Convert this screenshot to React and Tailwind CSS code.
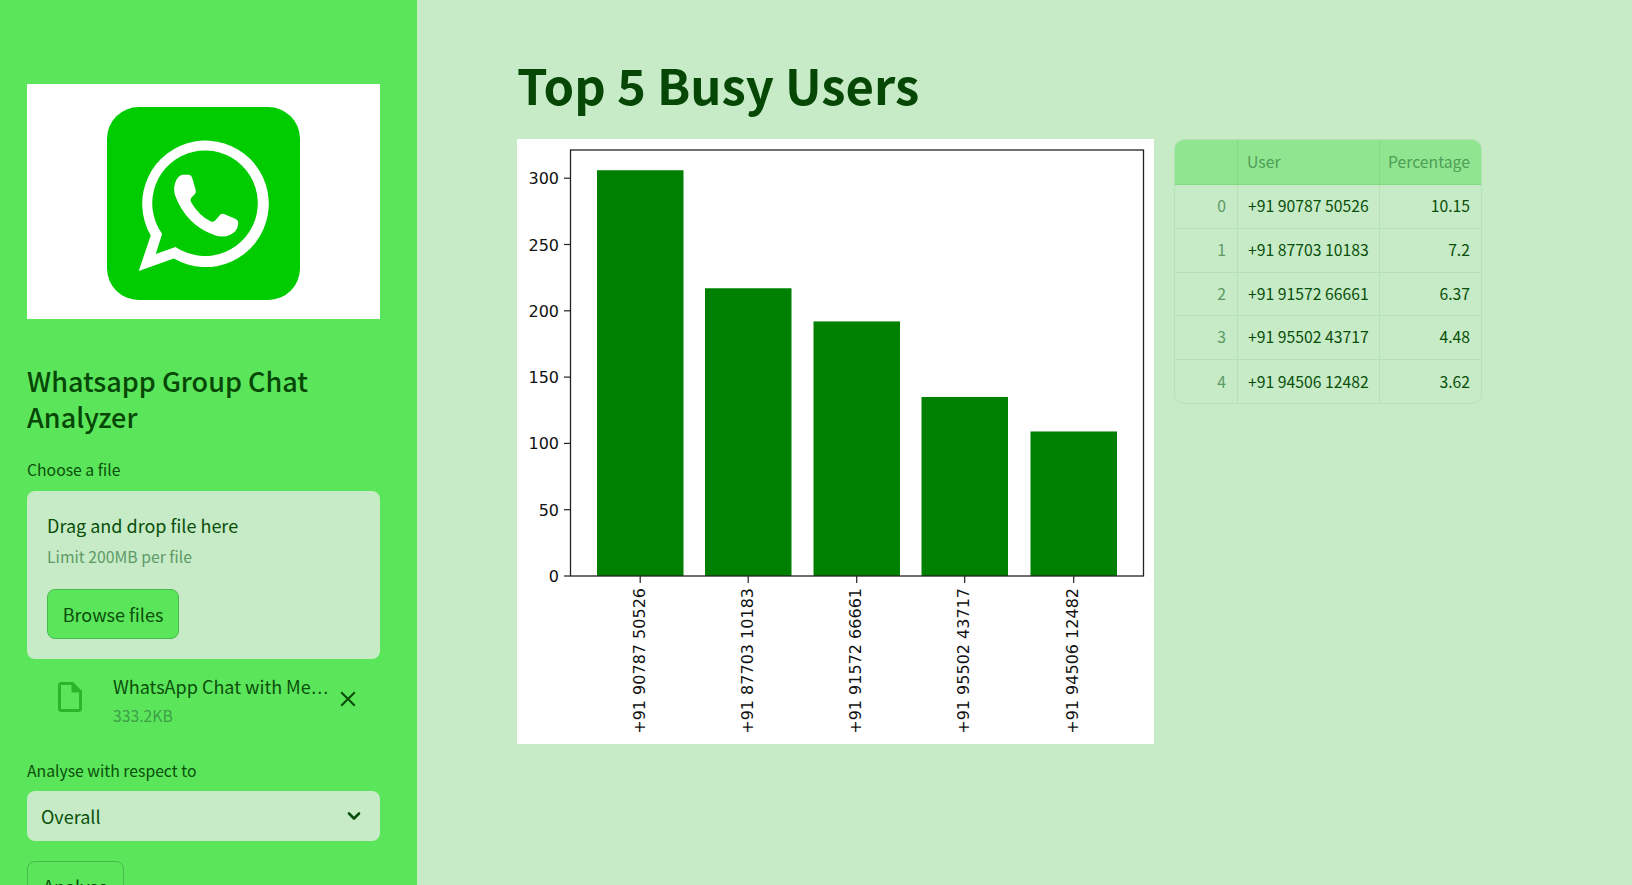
import React from 'react';
import { MdOutlineInsertDriveFile, MdClose } from 'react-icons/md';

const rows = [
    { user: '+91 90787 50526', pct: '10.15', count: 306 },
    { user: '+91 87703 10183', pct: '7.2', count: 217 },
    { user: '+91 91572 66661', pct: '6.37', count: 192 },
    { user: '+91 95502 43717', pct: '4.48', count: 135 },
    { user: '+91 94506 12482', pct: '3.62', count: 109 },
];

const font = { fontFamily: '"DejaVu Sans", sans-serif' };

const WhatsappLogo = () => (
    <svg width="193" height="193" viewBox="322 140 578 578" className="block">
        <rect x="322" y="140" width="578" height="578" rx="95" fill="#00CC00" />
        <path
            fill="#fff"
            fillRule="evenodd"
            d="M453 525 L417 631 L522 594 A189.5 189.5 0 1 0 453 525 Z M487 520 L468 580 L527 559 A158 158 0 1 0 487 520 Z"
        />
        <path
            fill="#fff"
            d="M548 343 L568 343 Q575 345 577 352 L588 390 Q589 397 584 402 L575 411 Q570 417 574 425 Q597 465 632 482 Q640 486 646 480 L661 463 Q666 458 674 461 L706 475 Q716 480 715 490 Q712 515 690 523 Q668 532 645 524 Q560 495 526 405 Q518 380 530 358 Q538 345 548 343 Z"
        />
    </svg>
);

const BarChart = () => {
    const base = 437;
    const perUnit = 66.3 / 50;
    const barXs = [80, 188, 296.5, 404.5, 513.5];
    return (
        <svg width="637" height="605" viewBox="0 0 637 605" className="block bg-white shrink-0">
            {rows.map((r, i) => (
                <rect key={r.user} x={barXs[i]} y={base - r.count * perUnit} width="86.5" height={r.count * perUnit} fill="#008000" />
            ))}
            <rect x="53.5" y="11" width="573" height="426" fill="none" stroke="#222" strokeWidth="1.3" />
            {[0, 50, 100, 150, 200, 250, 300].map(v => (
                <g key={v}>
                    <line x1="47" x2="53" y1={base - v * perUnit} y2={base - v * perUnit} stroke="#222" strokeWidth="1.2" />
                    <text x="42" y={base - v * perUnit + 6} textAnchor="end" fontSize="16" fill="#111" style={font}>{v}</text>
                </g>
            ))}
            {rows.map((r, i) => {
                const cx = barXs[i] + 43.2;
                return (
                    <g key={r.user}>
                        <line x1={cx} x2={cx} y1={base} y2={base + 7} stroke="#222" strokeWidth="1.2" />
                        <text transform={`translate(${cx + 4.5} ${base + 12}) rotate(-90)`} textAnchor="end" fontSize="16" fill="#111" style={font}>{r.user}</text>
                    </g>
                );
            })}
        </svg>
    );
};

const Sidebar = () => (
    <aside className="w-[417px] shrink-0 h-full overflow-hidden bg-[#5BE55B] pl-[27px] pr-[37px] pt-[84px] text-[#0A4F0A]">
        <div className="h-[235px] bg-white flex items-center justify-center pt-[4px]">
            <WhatsappLogo />
        </div>

        <h2 className="mt-[44px] text-[27px] leading-[36px] font-medium text-[#064706]">Whatsapp Group Chat Analyzer</h2>

        <label className="block mt-[25px] text-[15.75px] leading-[20px]">Choose a file</label>
        <div className="mt-[11px] h-[168px] rounded-lg bg-[#C6EBC6] px-5 pt-[22px]">
            <div className="text-[18px] leading-[24px] text-[#0A4F0A]">Drag and drop file here</div>
            <div className="mt-[10px] text-[15.75px] leading-[20px] text-[#5D9A66]">Limit 200MB per file</div>
            <button className="mt-[22px] h-[50px] w-[132px] rounded-lg border border-[#46BB4B] bg-[#5BE55B] text-[18px] text-[#0A4F0A]">Browse files</button>
        </div>

        <div className="mt-[15px] flex items-start h-[64px]">
            <div className="w-[86px] pl-[25px] text-[#2BB52B] shrink-0 pt-[5px]">
                <MdOutlineInsertDriveFile size={36} />
            </div>
            <div className="w-[218px] min-w-0">
                <div className="whitespace-nowrap text-[18px] leading-[24px]">WhatsApp Chat with Me<span className="font-['DejaVu_Sans']">…</span></div>
                <div className="mt-[6px] text-[15.75px] leading-[20px] text-[#3DA047]">333.2KB</div>
            </div>
            <MdClose size={26} className="ml-[4px] mt-[12px] shrink-0" />
        </div>

        <label className="block mt-[23px] text-[15.75px] leading-[20px]">Analyse with respect to</label>
        <div className="mt-[10px] h-[50px] rounded-lg bg-[#C6EBC6] pl-[14px] pr-[18px] flex items-center justify-between">
            <span className="text-[18px] leading-[24px] pb-[1px] text-[#0A4F0A]">Overall</span>
            <svg width="16" height="16" viewBox="0 0 16 16" fill="none" stroke="#0A4F0A" strokeWidth="2.6" strokeLinecap="round" strokeLinejoin="round">
                <path d="M3 5.5 L8 10.5 L13 5.5" />
            </svg>
        </div>

        <button className="mt-[20px] h-[50px] w-[97px] rounded-lg border border-[#46BB4B] text-[18px] text-[#0A4F0A]">Analyse</button>
    </aside>
);

const UserTable = () => (
    <div className="w-[308px] h-[265px] shrink-0 rounded-[10px] border border-[#B5E2B5] overflow-hidden">
        <div className="grid grid-cols-[63px_142px_1fr] h-[45px] bg-[#90E690] border-b border-[#82DB82] text-[15.75px] text-[#4E9E55]">
            <div className="border-r border-[#82DB82]" />
            <div className="border-r border-[#82DB82] flex items-center pl-[9px]">User</div>
            <div className="flex items-center justify-end pr-[11px]">Percentage</div>
        </div>
        {rows.map((r, i) => (
            <div key={r.user} className={`grid grid-cols-[63px_142px_1fr] h-[43.8px] text-[15.75px] ${i < 4 ? 'border-b border-[#B5E2B5]' : ''}`}>
                <div className="border-r border-[#B5E2B5] flex items-center justify-end pr-[11px] pb-[1px] text-[#5D9A66]">{i}</div>
                <div className="border-r border-[#B5E2B5] flex items-center pl-[10px] pb-[1px] text-[#0A4F0A]">{r.user}</div>
                <div className="flex items-center justify-end pr-[11px] pb-[1px] text-[#0A4F0A]">{r.pct}</div>
            </div>
        ))}
    </div>
);

export default function App() {
    return (
        <div className="flex h-[885px] w-full overflow-hidden bg-[#C6EBC6] font-['Noto_Sans_CJK_SC',sans-serif]">
            <Sidebar />
            <main className="flex-1 pl-[100px] pt-[52px]">
                <h1 className="text-[49px] leading-[64px] font-bold text-[#064706] mb-[23px]">Top 5 Busy Users</h1>
                <div className="flex items-start gap-[20px]">
                    <BarChart />
                    <UserTable />
                </div>
            </main>
        </div>
    );
}
